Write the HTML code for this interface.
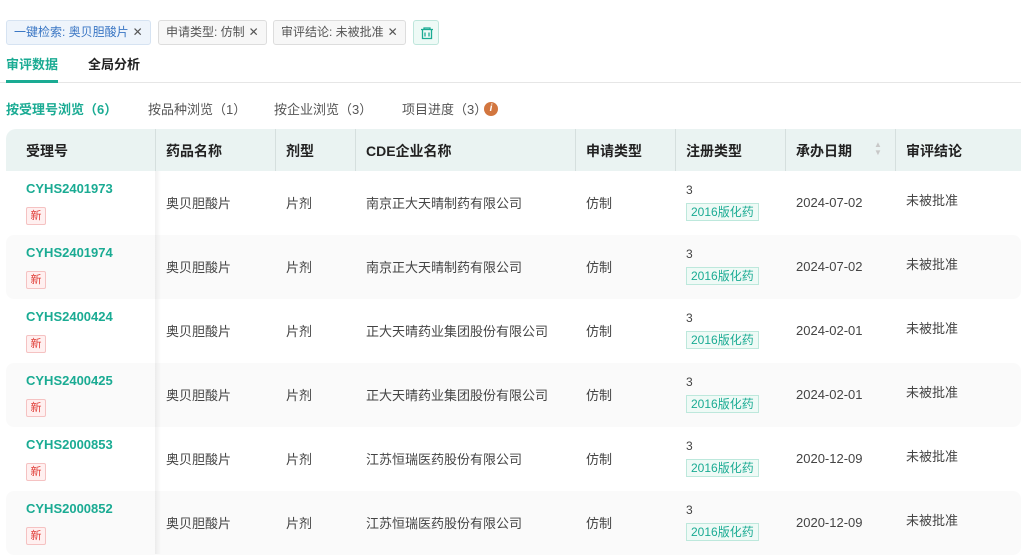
<!DOCTYPE html>
<html><head><meta charset="utf-8"><style>
*{margin:0;padding:0;box-sizing:border-box}
body{width:1021px;height:554px;overflow:hidden;background:#fff;font-family:"Liberation Sans","Noto Sans CJK SC",sans-serif;font-size:13px;color:#333;position:relative}
.tag{position:absolute;top:20px;height:25px;border:1px solid #ddd;border-radius:3px;background:#f7f7f7;color:#555;font-size:12px;line-height:23px;padding:0 7px;white-space:nowrap}
.tag.b{background:#eef4fb;border-color:#d6e3f2;color:#3a76c4}
.tag i{font-style:normal;color:#555;margin-left:4px}
.trash{position:absolute;left:413px;top:20px;width:26px;height:25px;border:1px solid #bfe6dc;border-radius:3px;background:#eefaf6}
.tabs{position:absolute;left:0;top:54px;width:1021px;height:29px;border-bottom:1px solid #e6e6e6}
.tabs span{position:absolute;top:0;font-size:13px;font-weight:bold;color:#222}
.tabs .a{color:#1aab93;left:6px}
.tabs .u{position:absolute;left:6px;top:26px;width:52px;height:3px;background:#1aab93}
.sub{position:absolute;top:99px;font-size:13px;color:#555}
.hdr{position:absolute;left:6px;top:129px;width:1015px;height:42px;background:#eaf3f2;border-radius:10px 0 0 0}
.hdr span{position:absolute;top:12px;font-weight:bold;font-size:14px;color:#222}
.sep{position:absolute;top:0;width:1px;height:42px;background:#d5dfde}
.row{position:absolute;left:6px;width:1015px;height:64px}
.row.g{background:#fafafa;border-radius:8px}
.row span{position:absolute;white-space:nowrap}
.id{left:20px;top:10px;color:#1aab93;font-weight:bold;font-size:13px}
.new{left:20px;top:36px;width:20px;height:18px;border:1px solid #f5c2c2;background:#fff0f0;color:#e0403a;font-size:11px;line-height:16px;text-align:center;border-radius:2px}
.c{top:22px;font-size:13px;color:#444}
.d{left:790px;top:24px!important}
.n3{left:680px;top:12px;font-size:12px;color:#444}
.t16{left:680px;top:32px;height:18px;border:1px solid #bde8dc;background:#effaf6;color:#1aab93;font-size:12px;line-height:16px;padding:0 4px}
.r{left:900px;top:19px!important}
.shadow{position:absolute;left:155px;top:171px;width:6px;height:383px;background:linear-gradient(90deg,rgba(0,0,0,.06),rgba(0,0,0,0))}
</style></head><body>
<div class="tag b" style="left:6px">一键检索: 奥贝胆酸片<i>✕</i></div>
<div class="tag" style="left:158px">申请类型: 仿制<i>✕</i></div>
<div class="tag" style="left:273px">审评结论: 未被批准<i>✕</i></div>
<div class="trash"><svg width="26" height="25" viewBox="0 0 26 25"><g fill="none" stroke="#1aab93" stroke-width="1.3"><path d="M7 8.5h12M10 8.5V7h6v1.5M8.5 8.5v9h9v-9M11 11.5v4M15 11.5v4"/></g></svg></div>
<div class="tabs"><span class="a">审评数据</span><span style="left:88px">全局分析</span><div class="u"></div></div>
<div class="sub" style="left:6px;color:#1aab93;font-weight:bold">按受理号浏览（6）</div>
<div class="sub" style="left:148px">按品种浏览（1）</div>
<div class="sub" style="left:274px">按企业浏览（3）</div>
<div class="sub" style="left:402px">项目进度（3）</div>
<div style="position:absolute;left:484px;top:102px;width:14px;height:14px;border-radius:50%;background:#d2763f;color:#fff;font-size:10px;font-weight:bold;font-style:italic;text-align:center;line-height:14px">i</div>
<div class="hdr">
<span style="left:20px">受理号</span><div class="sep" style="left:149px"></div>
<span style="left:160px">药品名称</span><div class="sep" style="left:269px"></div>
<span style="left:280px">剂型</span><div class="sep" style="left:349px"></div>
<span style="left:360px">CDE企业名称</span><div class="sep" style="left:569px"></div>
<span style="left:580px">申请类型</span><div class="sep" style="left:669px"></div>
<span style="left:680px">注册类型</span><div class="sep" style="left:779px"></div>
<span style="left:790px">承办日期</span><span style="left:868px;top:12px;color:#c8c8c8;font-size:8px;line-height:8px">▲<br>▼</span><div class="sep" style="left:889px"></div>
<span style="left:900px">审评结论</span>
</div>
<div class="row" style="top:171px"><span class="id">CYHS2401973</span><span class="new">新</span><span class="c" style="left:160px">奥贝胆酸片</span><span class="c" style="left:280px">片剂</span><span class="c" style="left:360px">南京正大天晴制药有限公司</span><span class="c" style="left:580px">仿制</span><span class="n3">3</span><span class="t16">2016版化药</span><span class="c d">2024-07-02</span><span class="c r">未被批准</span></div>
<div class="row g" style="top:235px"><span class="id">CYHS2401974</span><span class="new">新</span><span class="c" style="left:160px">奥贝胆酸片</span><span class="c" style="left:280px">片剂</span><span class="c" style="left:360px">南京正大天晴制药有限公司</span><span class="c" style="left:580px">仿制</span><span class="n3">3</span><span class="t16">2016版化药</span><span class="c d">2024-07-02</span><span class="c r">未被批准</span></div>
<div class="row" style="top:299px"><span class="id">CYHS2400424</span><span class="new">新</span><span class="c" style="left:160px">奥贝胆酸片</span><span class="c" style="left:280px">片剂</span><span class="c" style="left:360px">正大天晴药业集团股份有限公司</span><span class="c" style="left:580px">仿制</span><span class="n3">3</span><span class="t16">2016版化药</span><span class="c d">2024-02-01</span><span class="c r">未被批准</span></div>
<div class="row g" style="top:363px"><span class="id">CYHS2400425</span><span class="new">新</span><span class="c" style="left:160px">奥贝胆酸片</span><span class="c" style="left:280px">片剂</span><span class="c" style="left:360px">正大天晴药业集团股份有限公司</span><span class="c" style="left:580px">仿制</span><span class="n3">3</span><span class="t16">2016版化药</span><span class="c d">2024-02-01</span><span class="c r">未被批准</span></div>
<div class="row" style="top:427px"><span class="id">CYHS2000853</span><span class="new">新</span><span class="c" style="left:160px">奥贝胆酸片</span><span class="c" style="left:280px">片剂</span><span class="c" style="left:360px">江苏恒瑞医药股份有限公司</span><span class="c" style="left:580px">仿制</span><span class="n3">3</span><span class="t16">2016版化药</span><span class="c d">2020-12-09</span><span class="c r">未被批准</span></div>
<div class="row g" style="top:491px"><span class="id">CYHS2000852</span><span class="new">新</span><span class="c" style="left:160px">奥贝胆酸片</span><span class="c" style="left:280px">片剂</span><span class="c" style="left:360px">江苏恒瑞医药股份有限公司</span><span class="c" style="left:580px">仿制</span><span class="n3">3</span><span class="t16">2016版化药</span><span class="c d">2020-12-09</span><span class="c r">未被批准</span></div>
<div class="shadow"></div>
</body></html>
